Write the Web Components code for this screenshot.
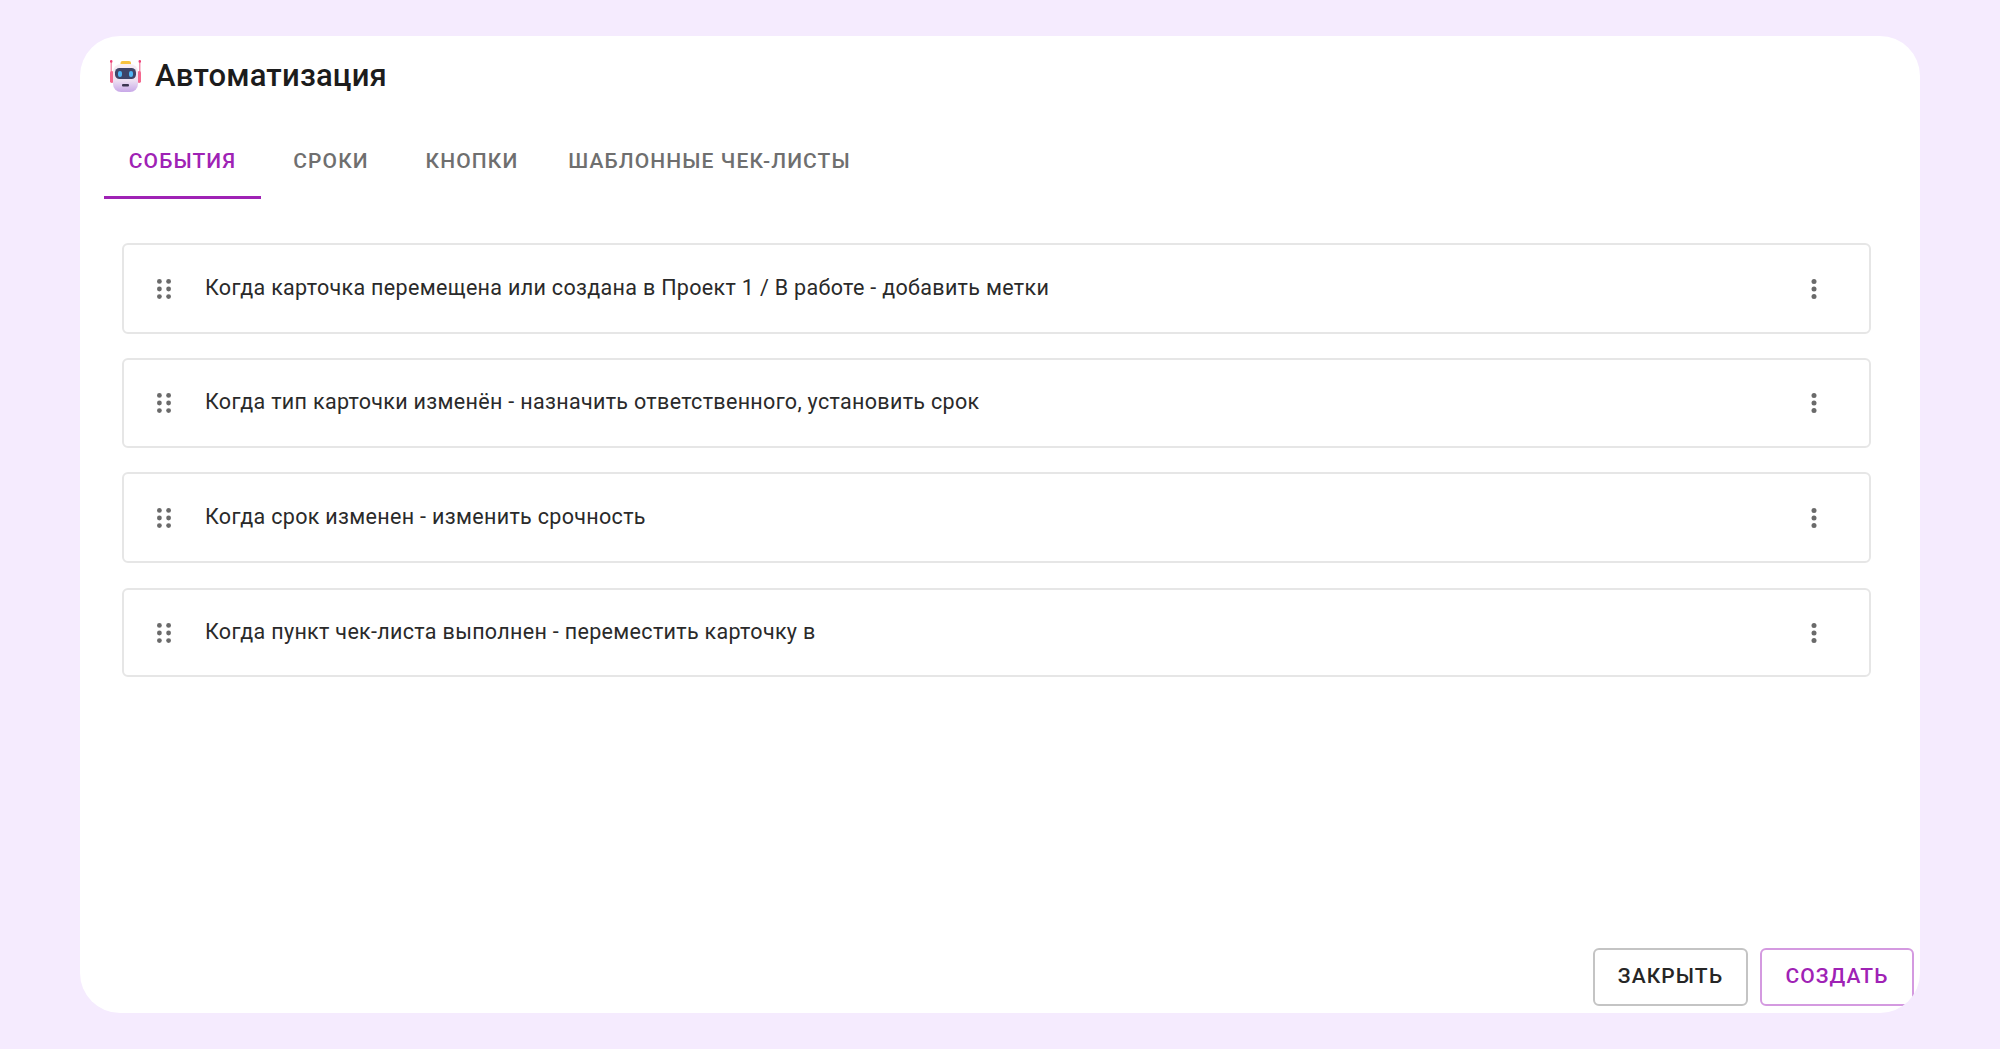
<!DOCTYPE html>
<html lang="ru">
<head>
<meta charset="utf-8">
<title>Автоматизация</title>
<style>
    html, body { margin: 0; height: 100%; }
    body { background: #f5ebfe; font-family: Roboto, "Liberation Sans", sans-serif; }
</style>
</head>
<body>
<automation-dialog heading="Автоматизация">
    <tab-bar slot="tabs">
        <tab-item active style="--tab-width:157px">События</tab-item>
        <tab-item style="--tab-width:140px">Сроки</tab-item>
        <tab-item style="--tab-width:142px">Кнопки</tab-item>
        <tab-item style="--tab-width:333px">Шаблонные чек-листы</tab-item>
    </tab-bar>
    <rule-row style="--row-h:91px">Когда карточка перемещена или создана в Проект 1 / В работе - добавить метки</rule-row>
    <rule-row style="--row-h:90px">Когда тип карточки изменён - назначить ответственного, установить срок</rule-row>
    <rule-row style="--row-h:91px">Когда срок изменен - изменить срочность</rule-row>
    <rule-row style="--row-h:89px;margin-top:1px">Когда пункт чек-листа выполнен - переместить карточку в</rule-row>
    <dialog-button slot="actions" style="--btn-width:155px">Закрыть</dialog-button>
    <dialog-button slot="actions" style="--btn-width:154px" primary>Создать</dialog-button>
</automation-dialog>

<script>
const dialogTemplate = document.createElement("template");
dialogTemplate.innerHTML =
`<style>
    :host {
        display: flex;
        box-sizing: border-box;
        height: 100%;
        padding: 36px 80px;
    }
    .card {
        flex: 1;
        display: flex;
        flex-direction: column;
        background: #fff;
        border-radius: 40px;
        overflow: hidden;
        min-width: 0;
    }
    header {
        display: flex;
        align-items: center;
        gap: 14px;
        height: 64px;
        padding: 15px 0 0 30px;
        box-sizing: border-box;
    }
    h1 {
        margin: 0;
        font: 500 31px/40px Roboto, "Liberation Sans", sans-serif;
        letter-spacing: 0.2px;
        color: #1c1c1c;
    }
    .tabs { padding: 26px 0 0 24px; height: 73px; }
    main {
        flex: 1;
        display: flex;
        flex-direction: column;
        gap: 24px;
        padding: 44px 49px 0 42px;
    }
    footer {
        display: flex;
        justify-content: flex-end;
        gap: 12px;
        padding: 0 6px 7px 0;
    }
    svg { display: block; flex: none; }
</style>
<div class="card">
    <header>
        <svg width="31" height="32" viewBox="0 0 31 32">
            <defs>
                <linearGradient id="face" x1="0" y1="0" x2="0" y2="1">
                    <stop offset="0" stop-color="#f8eef4"/>
                    <stop offset="0.6" stop-color="#ecdff2"/>
                    <stop offset="1" stop-color="#c8a8e8"/>
                </linearGradient>
            </defs>
            <rect x="10.5" y="1" width="10.5" height="4.5" rx="2" fill="#f7c23f"/>
            <path d="M1.2 1v12M29.8 1v12" stroke="#f2789c" stroke-width="1.2"/>
            <circle cx="1.2" cy="1.4" r="1.3" fill="#ee3f78"/>
            <circle cx="29.8" cy="1.4" r="1.3" fill="#ee3f78"/>
            <rect x="0" y="11" width="3.6" height="12" rx="1.8" fill="#f4688f"/>
            <rect x="27.4" y="11" width="3.6" height="12" rx="1.8" fill="#f4688f"/>
            <rect x="3" y="4" width="25" height="28" rx="8" fill="url(#face)"/>
            <rect x="5" y="8" width="21" height="11" rx="4.5" fill="#3e4468"/>
            <rect x="8" y="11" width="4" height="6" rx="2" fill="#4fb5f5"/>
            <rect x="19" y="11" width="4" height="6" rx="2" fill="#4fb5f5"/>
            <rect x="12" y="24" width="7" height="2.4" rx="1" fill="#3b3550"/>
        </svg>
        <h1></h1>
    </header>
    <div class="tabs"><slot name="tabs"></slot></div>
    <main><slot></slot></main>
    <footer><slot name="actions"></slot></footer>
</div>`;

class AutomationDialog extends HTMLElement {
    constructor() {
        super();
        this.attachShadow({ mode: "open" });
        this.shadowRoot.appendChild(dialogTemplate.content.cloneNode(true));
    }

    connectedCallback() {
        this.shadowRoot.querySelector("h1").textContent = this.getAttribute("heading");
    }
}

const tabBarTemplate = document.createElement("template");
tabBarTemplate.innerHTML =
`<style>
    :host { display: flex; height: 100%; }
</style>
<slot></slot>`;

class TabBar extends HTMLElement {
    constructor() {
        super();
        this.attachShadow({ mode: "open" });
        this.shadowRoot.appendChild(tabBarTemplate.content.cloneNode(true));
    }
}

const tabItemTemplate = document.createElement("template");
tabItemTemplate.innerHTML =
`<style>
    :host {
        display: flex;
        align-items: center;
        justify-content: center;
        box-sizing: border-box;
        width: var(--tab-width);
        height: 73px;
        font: 500 21px/24px Roboto, "Liberation Sans", sans-serif;
        letter-spacing: 1.1px;
        text-transform: uppercase;
        white-space: nowrap;
        color: #6f6f6f;
        border-bottom: 3px solid transparent;
    }
    :host([active]) {
        color: #9f22b5;
        border-bottom-color: #9f22b5;
    }
</style>
<slot></slot>`;

class TabItem extends HTMLElement {
    constructor() {
        super();
        this.attachShadow({ mode: "open" });
        this.shadowRoot.appendChild(tabItemTemplate.content.cloneNode(true));
    }
}

const ruleRowTemplate = document.createElement("template");
ruleRowTemplate.innerHTML =
`<style>
    :host {
        display: flex;
        align-items: center;
        box-sizing: border-box;
        height: var(--row-h);
        border: 2px solid #e6e6e6;
        border-radius: 6px;
        font: 400 21.5px/24px Roboto, "Liberation Sans", sans-serif;
        letter-spacing: 0.32px;
        color: #2a2a2a;
    }
    .drag { margin-left: 33px; flex: none; }
    .text { margin-left: 34px; flex: 1; margin-bottom: 2px; }
    .more { margin-right: 52px; flex: none; }
    svg { display: block; }
</style>
<svg class="drag" width="14" height="20" viewBox="0 0 14 20" fill="#6a6a6a">
    <circle cx="2.4" cy="2.4" r="2.4"/><circle cx="11.6" cy="2.4" r="2.4"/>
    <circle cx="2.4" cy="10" r="2.4"/><circle cx="11.6" cy="10" r="2.4"/>
    <circle cx="2.4" cy="17.6" r="2.4"/><circle cx="11.6" cy="17.6" r="2.4"/>
</svg>
<span class="text"><slot></slot></span>
<svg class="more" width="6" height="20" viewBox="0 0 6 20" fill="#6a6a6a">
    <circle cx="3" cy="2.5" r="2.5"/><circle cx="3" cy="10" r="2.5"/><circle cx="3" cy="17.5" r="2.5"/>
</svg>`;

class RuleRow extends HTMLElement {
    constructor() {
        super();
        this.attachShadow({ mode: "open" });
        this.shadowRoot.appendChild(ruleRowTemplate.content.cloneNode(true));
    }
}

const dialogButtonTemplate = document.createElement("template");
dialogButtonTemplate.innerHTML =
`<style>
    :host {
        display: flex;
        align-items: center;
        justify-content: center;
        box-sizing: border-box;
        width: var(--btn-width);
        height: 58px;
        border: 2px solid #c4c4c4;
        border-radius: 6px;
        font: 500 21px/24px Roboto, "Liberation Sans", sans-serif;
        letter-spacing: 1.1px;
        text-transform: uppercase;
        color: #262626;
    }
    :host([primary]) {
        border-color: #d49ae0;
        color: #9f22b5;
    }
    span { margin-bottom: 2px; }
</style>
<span><slot></slot></span>`;

class DialogButton extends HTMLElement {
    constructor() {
        super();
        this.attachShadow({ mode: "open" });
        this.shadowRoot.appendChild(dialogButtonTemplate.content.cloneNode(true));
    }
}

customElements.define("automation-dialog", AutomationDialog);
customElements.define("tab-bar", TabBar);
customElements.define("tab-item", TabItem);
customElements.define("rule-row", RuleRow);
customElements.define("dialog-button", DialogButton);
</script>
</body>
</html>
